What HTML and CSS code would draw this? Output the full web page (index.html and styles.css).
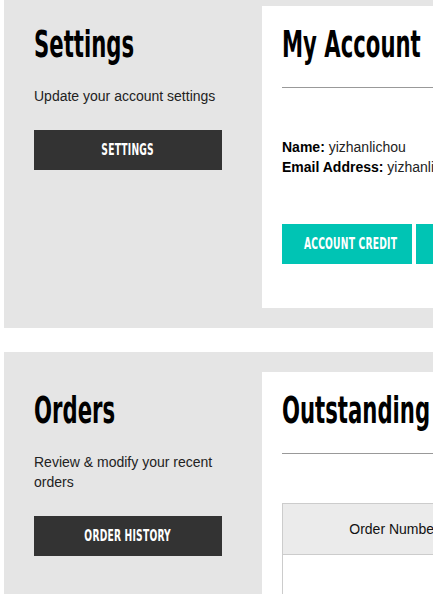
FILE: index.html
```html
<!DOCTYPE html>
<html lang="en">
<head>
  <meta charset="UTF-8" />
  <title>My Account</title>
  <link rel="stylesheet" href="styles.css">
</head>
<body>
  <div class="page">

    <!-- Settings / account details -->
    <section class="panel panel-top">
      <div class="panel-side">
        <h2 class="title"><span>Settings</span></h2>
        <p>Update your account settings</p>
        <a class="btn btn-dark" href="#"><span>Settings</span></a>
      </div>
      <div class="panel-card">
        <h2 class="title"><span>My Account</span></h2>
        <hr>
        <div class="info">
          <p><strong>Name:</strong> yizhanlichou</p>
          <p><strong>Email Address:</strong> yizhanlichou@gmail.com</p>
        </div>
        <div class="actions">
          <a class="btn btn-teal" href="#"><span>Account Credit</span></a>
          <a class="btn btn-teal" href="#"><span>Change Password</span></a>
        </div>
      </div>
    </section>

    <!-- Orders -->
    <section class="panel">
      <div class="panel-side">
        <h2 class="title"><span>Orders</span></h2>
        <p>Review &amp; modify your recent orders</p>
        <a class="btn btn-dark" href="#"><span>Order History</span></a>
      </div>
      <div class="panel-card">
        <h2 class="title"><span>Outstanding Orders</span></h2>
        <hr>
        <table class="orders">
          <thead>
            <tr>
              <th class="col-number">Order Number</th>
              <th>Date</th>
              <th>Status</th>
              <th>Total</th>
            </tr>
          </thead>
          <tbody>
            <tr>
              <td></td><td></td><td></td><td></td>
            </tr>
          </tbody>
        </table>
      </div>
    </section>

  </div>
</body>
</html>
```

FILE: styles.css
```css
html {
  overflow: hidden;
}

body {
  font-family: "Liberation Sans", Arial, sans-serif;
  font-size: 14px;
  color: #222;
  background: #fff;
  margin: 0;
  padding: 0;
}

.page {
  width: 1000px;
  padding-left: 4px;
}

.panel {
  display: flex;
  align-items: flex-start;
  background: #e5e5e5;
  padding: 20px 0;
  margin-bottom: 24px;
}

/* page is scrolled a little */
.panel-top {
  margin-top: -14px;
}

.panel-side {
  width: 188px;
  padding: 15px 40px 0 30px;
  flex-shrink: 0;
}

.panel-side p {
  margin: 19px 0 24px;
  line-height: 20px;
}

.panel-card {
  flex: 1;
  background: #fff;
  padding: 15px 20px 44px;
}

/* no Oswald offline: squeeze a condensed bold face instead */
.title {
  margin: 0;
  font-family: "DejaVu Sans Condensed", "Liberation Sans", sans-serif;
  font-weight: bold;
  font-size: 38px;
  line-height: 46px;
  color: #000;
  white-space: nowrap;
}

.title span {
  display: inline-block;
  transform: scaleX(0.62);
  transform-origin: left center;
}

hr {
  border: 0;
  border-top: 1px solid #999;
  margin: 20px 0 0;
}

.info {
  margin-top: 49px;
}

.info p {
  margin: 0;
  line-height: 20px;
  white-space: nowrap;
}

.info strong {
  color: #000;
}

.actions {
  margin-top: 47px;
  display: flex;
  gap: 4px;
}

.btn {
  display: inline-block;
  box-sizing: border-box;
  height: 40px;
  line-height: 40px;
  text-align: center;
  text-decoration: none;
  text-transform: uppercase;
  color: #fff;
  font-family: "DejaVu Sans Condensed", "Liberation Sans", sans-serif;
  font-weight: bold;
  font-size: 15px;
  white-space: nowrap;
}

.btn span {
  display: inline-block;
  transform: scaleX(0.68);
  letter-spacing: 0.3px;
}

.btn-dark {
  background: #333;
  width: 188px;
}

.btn-teal {
  background: #00c4b4;
  width: 130px;
}

.orders {
  margin-top: 49px;
  border-collapse: collapse;
  width: 100%;
}

.orders th {
  background: #ebebeb;
  border: 1px solid #ccc;
  font-weight: normal;
  color: #111;
  height: 48px;
  text-align: center;
}

.orders .col-number {
  width: 220px;
}

.orders td {
  border: 1px solid #ccc;
  height: 60px;
}
```
